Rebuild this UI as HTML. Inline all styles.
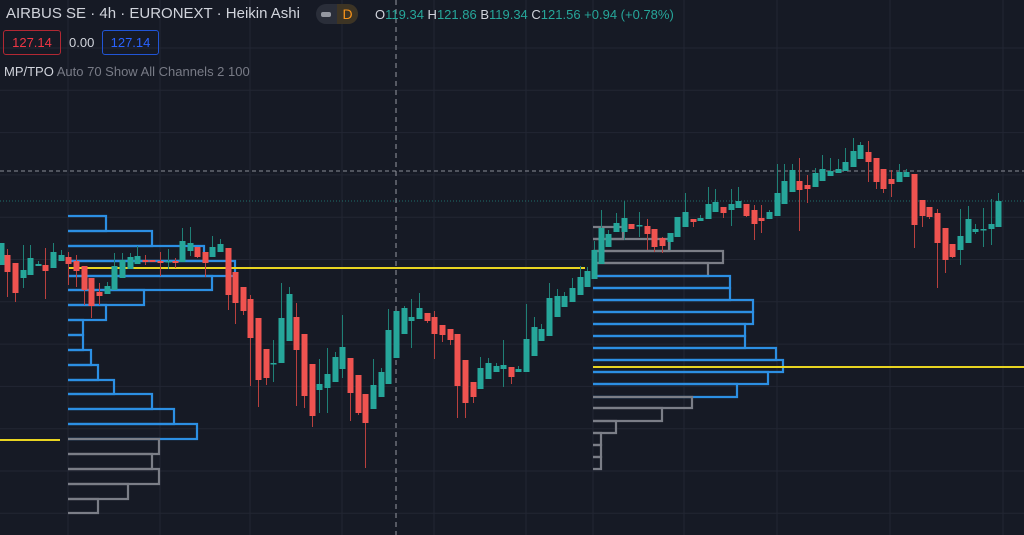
<!DOCTYPE html>
<html><head><meta charset="utf-8"><style>
html,body{margin:0;padding:0;background:#161a25;width:1024px;height:535px;overflow:hidden;font-family:"Liberation Sans",sans-serif}
svg{position:absolute;left:0;top:0}
.t{position:absolute;white-space:nowrap}
</style></head><body>
<svg id="s" width="1024" height="535" xmlns="http://www.w3.org/2000/svg"></svg>
<div class="t" style="left:6px;top:5px;font-size:15px;color:#d1d4dc">AIRBUS SE · 4h · EURONEXT · Heikin Ashi</div>
<div class="t" style="left:316px;top:4px;width:42px;height:20px;border-radius:10px;background:#2a2e39"></div>
<div class="t" style="left:321px;top:12px;width:10px;height:5px;border-radius:2px;background:#9598a1"></div>
<div class="t" style="left:337px;top:4px;width:21px;height:20px;border-radius:0 10px 10px 0;background:#3d3424;color:#f7931a;font-size:14px;line-height:20px;text-align:center">D</div>
<div class="t" style="left:375px;top:7px;font-size:13px;color:#26a69a"><span style="color:#d1d4dc">O</span>119.34 <span style="color:#d1d4dc">H</span>121.86 <span style="color:#d1d4dc">B</span>119.34 <span style="color:#d1d4dc">C</span>121.56 +0.94 (+0.78%)</div>
<div class="t" style="left:3px;top:30px;width:56px;height:23px;border:1px solid #b22833;border-radius:3px;color:#f23645;font-size:13px;line-height:23px;text-align:center">127.14</div>
<div class="t" style="left:69px;top:35px;font-size:13px;color:#d1d4dc">0.00</div>
<div class="t" style="left:102px;top:30px;width:55px;height:23px;border:1px solid #2155d6;border-radius:3px;color:#2962ff;font-size:13px;line-height:23px;text-align:center">127.14</div>
<div class="t" style="left:4px;top:64px;font-size:13px;color:#b2b5be"><span style="color:#d1d4dc">MP/TPO</span> <span style="color:#787b86">Auto 70 Show All Channels 2 100</span></div>
<script>
var s=document.getElementById('s'),h='';
[68,160,250,342,434,526,593,684,777,890,1003].forEach(function(x){h+='<line x1="'+x+'" y1="0" x2="'+x+'" y2="535" stroke="#222633" stroke-width="1"/>';});
for(var y=48;y<535;y+=42.3){h+='<line x1="0" y1="'+y+'" x2="1024" y2="'+y+'" stroke="#222633" stroke-width="1"/>';}
h+='<line x1="0" y1="171" x2="1024" y2="171" stroke="#8a8d96" stroke-dasharray="4 3" stroke-width="1"/>';
h+='<line x1="0" y1="201" x2="1024" y2="201" stroke="#26a69a" stroke-opacity=".6" stroke-dasharray="1 2" stroke-width="1"/>';
h+='<line x1="396" y1="0" x2="396" y2="535" stroke="#9598a1" stroke-dasharray="5 4" stroke-width="1"/>';
var L=[[216,106],[231,152],[246,204],[261,235],[276,212],[290,144],[305,106],[320,83],[335,83],[350,91],[365,98],[380,114],[394,152],[409,174],[424,197],[439,159,1],[454,152,1],[469,159,1],[484,128,1],[499,98,1]];
for(var i=0;i<L.length;i++){var t=L[i][0],b=(i+1<L.length?L[i+1][0]:513);h+='<path d="M68 '+t+'H'+L[i][1]+'V'+b+'H68" fill="none" stroke="'+(L[i][2]?'#7b7e87':'#2c8fe3')+'" stroke-width="2.2"/>';}
var R=[[227,623,1],[239,669,1],[251,723,1],[263,708,1],[276,730],[288,730],[300,753],[312,753],[324,745],[336,745],[348,776],[360,783],[372,768],[384,737],[397,692,1],[408,662,1],[421,616,1],[433,601,1],[445,601,1],[457,601,1]];
for(var i=0;i<R.length;i++){var t=R[i][0],b=(i+1<R.length?R[i+1][0]:469);h+='<path d="M593 '+t+'H'+R[i][1]+'V'+b+'H593" fill="none" stroke="'+(R[i][2]?'#7b7e87':'#2c8fe3')+'" stroke-width="2.2"/>';}
h+='<line x1="68" y1="268" x2="585" y2="268" stroke="#e8d421" stroke-width="2"/>';
h+='<line x1="0" y1="440" x2="60" y2="440" stroke="#e8d421" stroke-width="2"/>';
h+='<line x1="593" y1="367" x2="1024" y2="367" stroke="#e8d421" stroke-width="2"/>';
var C=[
[1,1,243,265,243,265],[7,0,255,272,249,297],[15,0,263,293,263,302],[23,1,270,278,245,288],[30,1,258,275,245,275],[38,1,264,266,261,266],[45,0,265,271,248,299],[53,1,252,268,243,268],[61,1,255,261,250,261],[68,0,257,264,252,285],[76,0,261,271,255,287],[84,0,266,290,266,305],[91,0,278,306,278,318],[99,0,292,296,283,305],[107,1,286,294,282,294],[114,1,266,290,253,290],[122,1,260,278,253,278],[130,1,257,269,253,269],[137,1,256,264,246,264],[145,0,260,262,255,265],[152,0,260,262,260,262],[160,0,261,263,252,276],[168,1,261,262,249,269],[175,0,261,263,258,268],[182,1,241,262,228,262],[190,1,243,251,227,256],[197,0,247,257,247,258],[205,0,252,263,252,277],[212,1,247,257,236,257],[220,1,244,252,239,252],
[228,0,248,295,248,310],[235,0,272,303,272,324],[243,0,287,311,287,315],[250,0,299,338,295,386],[258,0,318,380,318,407],[266,0,349,378,349,385],[273,1,363,364,340,382],[281,1,318,363,283,363],[289,1,294,341,287,341],[296,0,317,350,303,406],[304,0,334,396,334,408],[312,0,364,416,364,427],[319,1,384,390,359,413],[327,1,374,388,348,413],[335,1,357,382,352,382],[342,1,347,369,315,378],[350,0,358,393,358,421],[358,0,375,413,375,415],[365,0,394,423,394,468],[373,1,385,409,359,409],[381,1,372,397,368,397],[388,1,330,384,309,384],[396,1,311,358,311,358],[404,1,308,334,306,334],[411,1,317,321,299,348],[419,1,308,319,293,319],[427,0,313,321,313,323],[434,0,317,334,311,359],[442,0,325,335,325,342],[450,0,329,340,329,345],[457,0,334,386,334,418],[465,0,360,403,360,418],[473,0,382,397,382,403],[480,1,368,389,357,389],[488,1,363,379,358,379],[496,1,366,372,363,372],[503,1,365,369,340,387],[511,0,367,377,367,384],[518,1,369,372,366,372],[526,1,339,372,304,372],[534,1,327,356,317,356],[541,1,329,341,324,341],[549,1,298,336,283,336],[557,1,296,317,289,317],[564,1,296,307,292,307],[572,1,288,302,278,302],[580,1,277,295,266,295],
[587,1,271,287,267,287],[594,1,250,279,241,279],[601,1,228,264,210,264],[608,1,234,247,230,247],[616,1,223,232,213,232],[624,1,218,232,201,240],[631,0,224,229,224,229],[639,1,225,226,212,237],[647,0,226,234,219,250],[654,0,229,247,229,252],[662,0,238,246,237,253],[670,1,233,242,233,250],[677,1,217,237,218,237],[685,1,212,227,193,227],[693,0,219,222,219,227],[700,1,218,221,215,221],[708,1,204,219,187,219],[715,1,202,212,189,212],[723,0,207,213,207,218],[731,1,204,210,189,226],[738,1,201,208,187,208],[746,0,204,216,204,217],[754,0,210,224,205,240],[761,0,218,221,205,233],[769,1,212,219,210,219],[777,1,193,216,164,216],[784,1,181,204,164,204],[792,1,170,192,164,192],[799,0,181,190,158,231],[807,0,185,189,175,203],[815,1,173,187,168,187],[822,1,169,181,155,181],[830,1,171,176,158,176],[838,1,169,173,159,173],[845,1,162,171,148,171],[853,1,151,167,138,167],[860,1,145,159,142,159],[868,0,152,162,141,182],[876,0,158,182,158,189],[883,0,169,189,169,193],[891,0,179,184,170,197],[899,1,172,182,164,182],[906,1,172,177,169,177],[914,0,174,225,174,248],[922,0,200,216,200,227],[929,0,207,217,207,219],[937,0,213,243,209,288],[945,0,228,260,228,273],[952,0,244,257,244,258],[960,1,236,250,209,265],[968,1,219,243,206,243],[975,1,229,232,224,234],[983,1,229,230,208,247],[991,1,224,229,199,245],[998,1,201,227,193,227]];
C.forEach(function(c){var col=c[1]?'#26a69a':'#ef5350',wc=c[1]?'#1f8076':'#b8403e';
h+='<line x1="'+(c[0]+.5)+'" y1="'+c[4]+'" x2="'+(c[0]+.5)+'" y2="'+c[5]+'" stroke="'+wc+'" stroke-width="1"/>';
var bh=Math.max(c[3]-c[2],1.5);h+='<rect x="'+(c[0]-2.5)+'" y="'+c[2]+'" width="6" height="'+bh+'" fill="'+col+'"/>';});
s.innerHTML=h;
</script>
</body></html>
